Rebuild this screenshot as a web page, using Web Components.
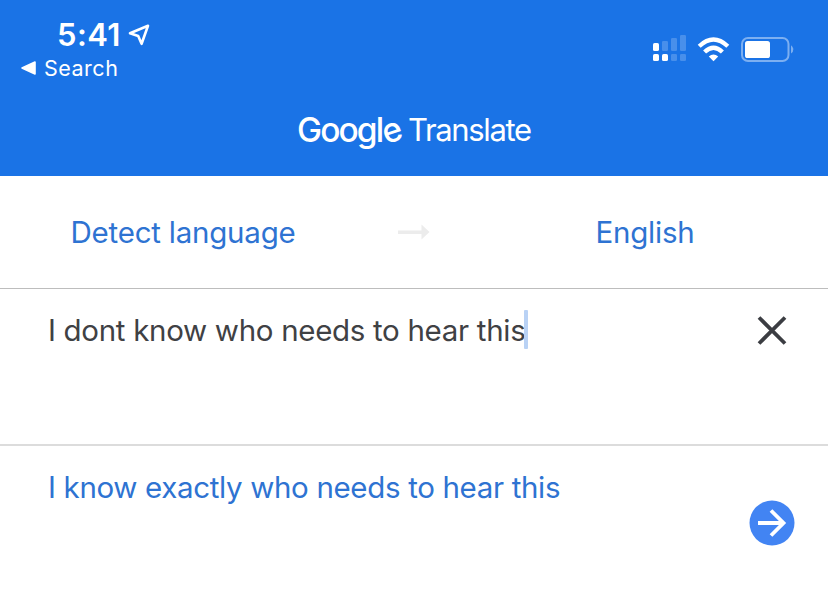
<!DOCTYPE html>
<html lang="en"><head><meta charset="utf-8"><title>Google Translate</title>
<style>html,body{margin:0;background:#fff;font-family:Inter,"Liberation Sans",sans-serif;overflow:hidden}</style></head>
<body><translate-app></translate-app>
<script>
const define=(name,html)=>customElements.define(name,class extends HTMLElement{
  constructor(){super();const t=document.createElement('template');t.innerHTML=html;this.attachShadow({mode:'open'}).append(t.content.cloneNode(true));}
});
define('status-bar',`<style>
:host{display:flex;justify-content:space-between;height:100px;color:#fff}
.left{padding:16px 0 0 20px}.time{display:flex;align-items:center;height:38px;padding-left:37px;font-size:31px;font-weight:600;letter-spacing:.4px;line-height:38px}
.time svg{margin-left:7px}.back{display:flex;align-items:center;height:28px;font-size:21.5px;line-height:28px;letter-spacing:.5px}
.back svg{margin-right:8px}.right{padding:34px 32px 0 0}svg{display:block}</style>
<div class="left"><div class="time"><span>5:41</span><svg width="22" height="24" viewBox="0 0 22 24"><path d="M20 2.8 2 10.2 10.2 13 13.6 20.8Z" fill="none" stroke="#fff" stroke-width="2.6" stroke-linejoin="round"/></svg></div>
<div class="back"><svg width="16" height="14" viewBox="0 0 16 14"><path d="M15 1V13L2 7Z" fill="#fff" stroke="#fff" stroke-width="1.6" stroke-linejoin="round"/></svg><span>Search</span></div></div>
<div class="right"><svg width="144" height="30" viewBox="652 34 144 30" fill="#fff">
<rect x="653" y="43" width="6" height="8" rx="1.6"/><rect x="653" y="54" width="6" height="7" rx="1.6"/><rect x="662" y="54" width="6" height="7" rx="1.6"/>
<g opacity=".2"><rect x="662" y="41" width="6" height="10" rx="1.3"/><rect x="671" y="38" width="6" height="13" rx="1.3"/><rect x="680" y="35" width="6" height="16" rx="1.3"/><rect x="671" y="54" width="6" height="7" rx="1.3"/><rect x="680" y="54" width="6" height="7" rx="1.3"/></g>
<path d="M713.5 61.3 708.8 56.6Q713.5 52.6 718.2 56.6Z"/><g fill="none" stroke="#fff" stroke-width="4.3"><path d="M699.2 46.2Q713.5 32.8 727.8 46.2"/><path d="M704.6 52Q713.5 43.4 722.4 52"/></g>
<rect x="742" y="38" width="46.5" height="23" rx="6" fill="none" stroke="#fff" stroke-opacity=".43" stroke-width="2"/><rect x="745" y="41" width="25" height="17" rx="2.6"/><path d="M791 45.2Q796 49.3 791 53.6Z" fill-opacity=".43"/></svg></div>`);
define('brand-title',`<style>:host{display:flex;height:76px;padding-left:297px;color:#fff;white-space:nowrap;line-height:60px}
.g{font-size:33.5px;font-weight:500;width:111px;letter-spacing:-1.9px}.t{font-size:31px;letter-spacing:-1.35px}.e{display:inline-block;line-height:1;transform:rotate(-18deg)}</style>
<span class="g">Googl<span class="e">e</span></span><span class="t">Translate</span>`);
define('language-bar',`<style>:host{display:grid;grid-template-columns:366px 96px 366px;height:112px;align-items:center;justify-items:center;border-bottom:1px solid #bdbdbd;color:#2e73d2;font-size:29.5px}
span{line-height:40px;padding-bottom:1px}.a{letter-spacing:-.23px}.b{letter-spacing:-.2px}svg{display:block}</style>
<span class="a">Detect language</span><svg width="34" height="18" viewBox="0 0 34 18"><path d="M1 7.5H24.5V1.5L32.5 9 24.5 16.5V11H1Z" fill="#ececec"/></svg><span class="b">English</span>`);
define('source-panel',`<style>:host{display:flex;justify-content:space-between;box-sizing:border-box;height:157px;padding:21px 41px 0 48px;border-bottom:2px solid #dcdcdc;color:#3f4144;font-size:29.5px}
.text{display:flex;height:40px;line-height:41px;letter-spacing:-.31px;white-space:nowrap}i{width:4px;height:39px;margin-left:-1px;border-radius:1px;background:#b9d2f5}svg{display:block;margin-top:5px}</style>
<div class="text"><span>I dont know who needs to hear this</span><i></i></div><svg width="30" height="30" viewBox="0 0 30 30"><path d="M2 2.5 28 28.5M28 2.5 2 28.5" stroke="#3b3d42" stroke-width="3.8"/></svg>`);
define('result-panel',`<style>:host{display:flex;justify-content:space-between;box-sizing:border-box;height:150px;padding:22px 33px 0 48px;color:#2e73d2;font-size:29.5px}
span{height:40px;line-height:39px;letter-spacing:-.34px;white-space:nowrap}svg{display:block;margin-top:32px}</style>
<span>I know exactly who needs to hear this</span><svg width="46" height="46" viewBox="0 0 46 46"><circle cx="23" cy="23" r="22.5" fill="#4284f3"/><path d="M9 23H35M22 10.5 34.5 23 22 35.5" fill="none" stroke="#fff" stroke-width="3.8"/></svg>`);
define('translate-app',`<style>:host{display:block;width:828px;height:596px;background:#fff;overflow:hidden}header{height:176px;background:#1a73e6}</style>
<header><status-bar></status-bar><brand-title></brand-title></header><language-bar></language-bar><source-panel></source-panel><result-panel></result-panel>`);
</script></body></html>
